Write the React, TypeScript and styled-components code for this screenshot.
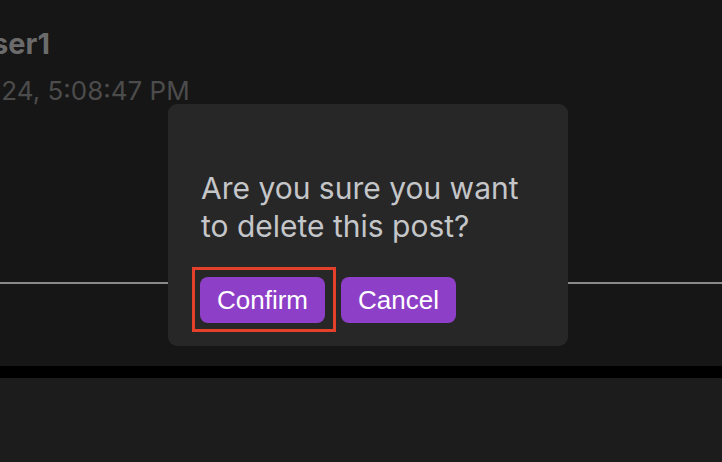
import React from "react";
import styled, { createGlobalStyle } from "styled-components";

const GlobalStyle = createGlobalStyle`
  html, body {
    margin: 0;
    padding: 0;
    background: #000;
    font-family: Inter, "Noto Sans", sans-serif;
  }
  * { box-sizing: border-box; }
`;

const Feed = styled.div`
  display: flex;
  flex-direction: column;
  gap: 12px;
  width: 722px;
  height: 462px;
  overflow: hidden;
`;

const PostCard = styled.div<{ $tone: string; $height: number }>`
  display: flex;
  flex-direction: column;
  flex: 0 0 ${(p) => p.$height}px;
  background: ${(p) => p.$tone};
  overflow: hidden;
`;

const PostHeader = styled.div`
  display: flex;
  flex-direction: column;
  padding-top: 26px;
  gap: 11px;
  white-space: nowrap;
`;

const Author = styled.span<{ $shift: number }>`
  margin-left: -${(p) => p.$shift}px;
  font-size: 29px;
  font-weight: 700;
  line-height: 36px;
  color: #6b6b6b;
`;

const Timestamp = styled.span<{ $shift: number }>`
  margin-left: -${(p) => p.$shift}px;
  font-size: 26px;
  line-height: 36px;
  color: #4c4c4c;
`;

const Body = styled.div`
  flex: 1;
`;

const Divider = styled.div`
  height: 2px;
  background: #8a8a8a;
`;

const Actions = styled.div`
  flex: 0 0 82px;
`;

const Modal = styled.div`
  position: fixed;
  left: 168px;
  top: 104px;
  width: 400px;
  padding: 65px 33px 23px 32px;
  background: #272727;
  border-radius: 9px;
  display: flex;
  flex-direction: column;
  gap: 32px;
`;

const Message = styled.p`
  margin: 0;
  font-size: 30px;
  line-height: 38px;
  color: #c4c6c9;
  padding-left: 1px;
`;

const ButtonRow = styled.div`
  display: flex;
  gap: 16px;
`;

const Focus = styled.div`
  position: relative;
  display: flex;
`;

const Highlight = styled.span`
  position: absolute;
  top: -10px;
  left: -8px;
  right: -11px;
  bottom: -9px;
  border: 3px solid #e4402a;
  pointer-events: none;
`;

const Button = styled.button`
  height: 46px;
  padding: 0 17px;
  border: none;
  border-radius: 8px;
  background: #8e3fc7;
  color: #fff;
  font-family: "Liberation Sans", Arial, sans-serif;
  font-size: 26px;
  line-height: 46px;
  cursor: pointer;
`;

export default function App() {
  return (
    <>
      <GlobalStyle />
      <Feed>
        <PostCard $tone="#161616" $height={366}>
          <PostHeader>
            <Author $shift={26}>user1</Author>
            <Timestamp $shift={31}>2024, 5:08:47 PM</Timestamp>
          </PostHeader>
          <Body />
          <Divider />
          <Actions />
        </PostCard>
        <PostCard $tone="#1c1c1c" $height={200} />
      </Feed>
      <Modal>
        <Message>Are you sure you want to delete this post?</Message>
        <ButtonRow>
          <Focus>
            <Button>Confirm</Button>
            <Highlight />
          </Focus>
          <Button>Cancel</Button>
        </ButtonRow>
      </Modal>
    </>
  );
}
